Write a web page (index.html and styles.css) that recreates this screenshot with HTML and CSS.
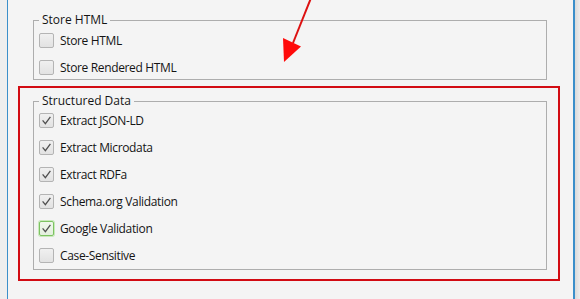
FILE: index.html
```html
<!DOCTYPE html>
<html>
<head>
<meta charset="utf-8">
<link rel="stylesheet" href="styles.css">
</head>
<body>
<div class="screen">
  <div class="outside"></div>
  <div class="window">
    <fieldset class="group store">
      <legend>Store HTML</legend>
      <label class="row"><span class="cb"></span>Store HTML</label>
      <label class="row"><span class="cb"></span>Store Rendered HTML</label>
    </fieldset>
    <div class="highlight">
      <fieldset class="group structured">
        <legend>Structured Data</legend>
        <label class="row"><span class="cb checked"><svg viewBox="0 0 15 15"><polyline points="3,7.4 6.2,11.2 12,3.2"/></svg></span>Extract JSON-LD</label>
        <label class="row"><span class="cb checked"><svg viewBox="0 0 15 15"><polyline points="3,7.4 6.2,11.2 12,3.2"/></svg></span>Extract Microdata</label>
        <label class="row"><span class="cb checked"><svg viewBox="0 0 15 15"><polyline points="3,7.4 6.2,11.2 12,3.2"/></svg></span>Extract RDFa</label>
        <label class="row"><span class="cb checked"><svg viewBox="0 0 15 15"><polyline points="3,7.4 6.2,11.2 12,3.2"/></svg></span>Schema.org Validation</label>
        <label class="row"><span class="cb checked focus"><svg viewBox="0 0 15 15"><polyline points="3,7.4 6.2,11.2 12,3.2"/></svg></span>Google Validation</label>
        <label class="row"><span class="cb"></span>Case-Sensitive</label>
      </fieldset>
    </div>
  </div>
  <div class="shade"></div>
  <svg class="arrow" viewBox="0 0 580 299" width="580" height="299">
    <line x1="311" y1="-2" x2="293" y2="43" />
    <polygon points="283,38 301,46.5 284,62" />
  </svg>
</div>
</body>
</html>
```

FILE: styles.css
```css
html, body {
  margin: 0;
  padding: 0;
  background: #f3f3f3;
}
.screen {
  position: relative;
  display: flex;
  width: 580px;
  height: 299px;
  overflow: hidden;
  font-family: "Open Sans", "Noto Sans", sans-serif;
  font-size: 12px;
  color: #141414;
}
.outside {
  width: 7px;
  background: #eeeeee;
}
.window {
  width: 564px;
  border-left: 1px solid #3b8fca;
  border-right: 2px solid #3b8fca;
  background: #f4f4f4;
  padding-top: 12px;
  padding-left: 1px;
  box-sizing: content-box;
}
.shade {
  flex: 1;
  background: linear-gradient(to right, #dadada, #ececec);
}
.group {
  margin: 0;
  border: 1px solid #adadad;
  padding: 1px 5px 1px 5px;
  display: flex;
  flex-direction: column;
  gap: 5px;
}
.group legend {
  padding: 0 3px;
  line-height: 16px;
  height: 16px;
}
.store {
  margin-left: 24px;
  width: 514px;
  box-sizing: border-box;
}
.highlight {
  margin-top: 6px;
  margin-left: 9px;
  width: 542px;
  box-sizing: border-box;
  border: 2px solid #d20b12;
  padding: 5px 11px 9px 13px;
}
.structured {
  width: 514px;
  box-sizing: border-box;
  padding-top: 0;
  padding-bottom: 3px;
}
.row {
  display: flex;
  align-items: center;
  height: 22px;
  letter-spacing: -0.35px;
}
.cb {
  width: 15px;
  height: 15px;
  box-sizing: border-box;
  border: 1px solid #b4b4b4;
  border-radius: 2px;
  background: linear-gradient(to bottom, #f0f0f0, #e2e2e2);
  margin-right: 6px;
  flex: none;
  display: flex;
}
.cb svg {
  width: 13px;
  height: 13px;
}
.cb polyline {
  fill: none;
  stroke: #505050;
  stroke-width: 1.5;
}
.cb.focus {
  border-color: #7cc361;
  box-shadow: 0 0 0 1px #c9e9bb;
  background: linear-gradient(to bottom, #f0f8ec, #e3efde);
}
.arrow {
  position: absolute;
  left: 0;
  top: 0;
  pointer-events: none;
}
.arrow line {
  stroke: #dd1111;
  stroke-width: 2;
}
.arrow polygon {
  fill: #ff0a0a;
}
```
